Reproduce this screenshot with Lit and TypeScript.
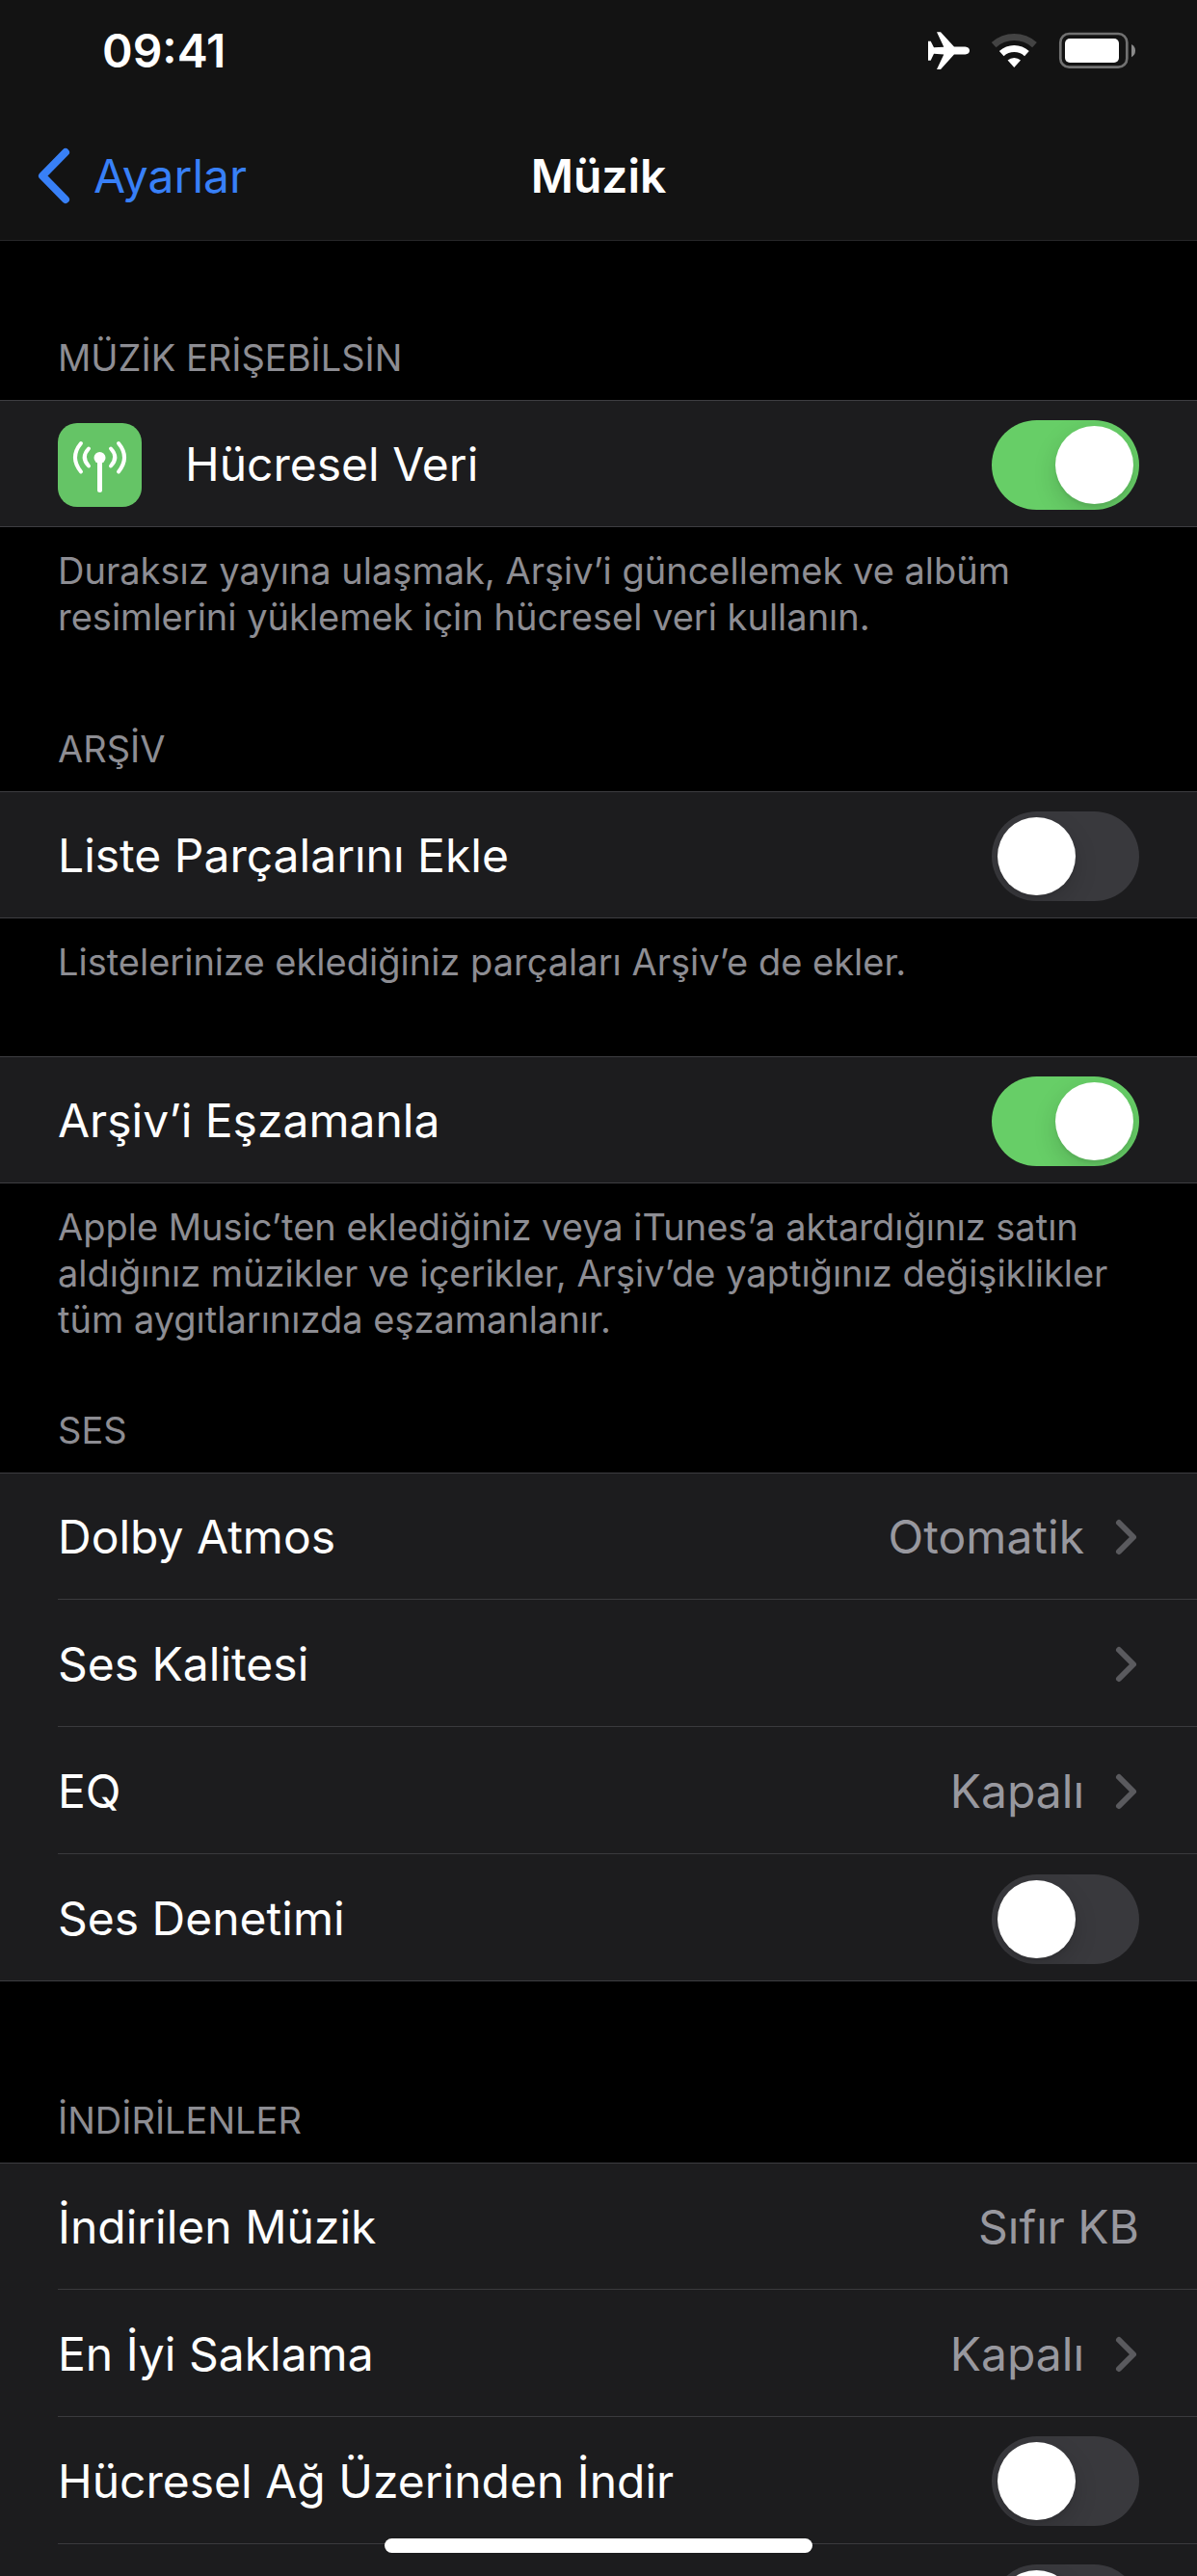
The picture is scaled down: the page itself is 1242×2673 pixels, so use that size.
import { LitElement, html, css, svg, nothing } from "lit";
import { customElement, property, state } from "lit/decorators.js";

interface Row {
  id: string;
  label: string;
  kind: "toggle" | "link" | "text";
  value?: string;
  on?: boolean;
  icon?: boolean;
  bare?: boolean;
}

interface Section {
  space: "first" | "wide" | "medium" | "tight" | "far";
  title?: string;
  rows: Row[];
  note?: string;
}

const SECTIONS: Section[] = [
  {
    space: "first",
    title: "MÜZİK ERİŞEBİLSİN",
    rows: [{ id: "cellular", label: "Hücresel Veri", kind: "toggle", on: true, icon: true }],
    note: "Duraksız yayına ulaşmak, Arşiv’i güncellemek ve albüm resimlerini yüklemek için hücresel veri kullanın.",
  },
  {
    space: "wide",
    title: "ARŞİV",
    rows: [{ id: "add-playlist", label: "Liste Parçalarını Ekle", kind: "toggle", on: false }],
    note: "Listelerinize eklediğiniz parçaları Arşiv’e de ekler.",
  },
  {
    space: "medium",
    rows: [{ id: "sync", label: "Arşiv’i Eşzamanla", kind: "toggle", on: true }],
    note: "Apple Music’ten eklediğiniz veya iTunes’a aktardığınız satın aldığınız müzikler ve içerikler, Arşiv’de yaptığınız değişiklikler tüm aygıtlarınızda eşzamanlanır.",
  },
  {
    space: "tight",
    title: "SES",
    rows: [
      { id: "dolby", label: "Dolby Atmos", kind: "link", value: "Otomatik" },
      { id: "quality", label: "Ses Kalitesi", kind: "link" },
      { id: "eq", label: "EQ", kind: "link", value: "Kapalı" },
      { id: "sound-check", label: "Ses Denetimi", kind: "toggle", on: false },
    ],
  },
  {
    space: "far",
    title: "İNDİRİLENLER",
    rows: [
      { id: "downloaded", label: "İndirilen Müzik", kind: "text", value: "Sıfır KB" },
      { id: "optimize", label: "En İyi Saklama", kind: "link", value: "Kapalı" },
      { id: "cellular-download", label: "Hücresel Ağ Üzerinden İndir", kind: "toggle", on: false },
      { id: "auto-download", label: "Otomatik İndirilenler", kind: "toggle", on: false, bare: true },
    ],
  },
];

@customElement("settings-row")
export class SettingsRow extends LitElement {
  static styles = css`
    :host {
      display: block;
      padding-left: 60px;
    }
    .body {
      box-sizing: border-box;
      min-height: 132px;
      display: flex;
      align-items: center;
      gap: 45px;
      padding: 2px 60px 0 0;
      color: #fff;
      font: inherit;
      text-decoration: none;
    }
    :host([divided]) .body {
      border-bottom: 1px solid #3a3a3d;
    }
    .label {
      flex: 1;
    }
    .end {
      display: flex;
      align-items: center;
      gap: 30px;
      color: #98989f;
    }
    .app-icon {
      display: block;
      width: 87px;
      height: 87px;
    }
    .chevron {
      display: block;
      width: 27px;
      height: 40px;
    }
    .switch {
      appearance: none;
      display: flex;
      box-sizing: border-box;
      width: 153px;
      height: 93px;
      margin: 0 0 0 auto;
      padding: 6px;
      border-radius: 47px;
      background: #39393d;
      overflow: hidden;
    }
    .switch::before {
      content: "";
      width: 81px;
      height: 81px;
      border-radius: 50%;
      background: #fff;
      box-shadow: 0 9px 24px rgba(0, 0, 0, 0.15), 0 3px 3px rgba(0, 0, 0, 0.06);
    }
    .switch:checked {
      background: #67ce67;
      justify-content: flex-end;
    }
  `;

  @property({ attribute: false }) row!: Row;
  @state() private on?: boolean;

  private icon() {
    return html`<svg class="app-icon" viewBox="0 0 87 87" aria-hidden="true">
      <rect width="87" height="87" rx="20" fill="#65c466" />
      <g fill="none" stroke="#fff" stroke-width="4" stroke-linecap="round">
        <path d="M43.5 38V69.500" stroke-width="5" />
        <path d="M32 26.500Q23.500 35.500 32 44.500M55 26.500Q63.500 35.500 55 44.500" />
        <path d="M24 21Q12 35.500 24 50.500M63 21Q75 35.500 63 50.500" />
      </g>
      <circle cx="43.5" cy="36" r="6" fill="#fff" />
    </svg>`;
  }

  render() {
    const r = this.row;
    if (r.kind === "toggle") {
      return html`<div class="body">
        ${r.icon ? this.icon() : nothing}
        ${r.bare ? nothing : html`<label class="label" for=${r.id}>${r.label}</label>`}
        <input
          class="switch"
          id=${r.id}
          type="checkbox"
          role="switch"
          aria-label=${r.label}
          .checked=${this.on ?? r.on ?? false}
          @change=${(e: Event) => (this.on = (e.target as HTMLInputElement).checked)}
        />
      </div>`;
    }
    if (r.kind === "link") {
      return html`<a class="body" href="#${r.id}">
        <span class="label">${r.label}</span>
        <span class="end">
          ${r.value ?? nothing}
          <svg class="chevron" viewBox="0 0 27 40" aria-hidden="true">
            <path d="M6 5 21 20 6 35" fill="none" stroke="#5a5a5e" stroke-width="6" stroke-linecap="round" stroke-linejoin="round" />
          </svg>
        </span>
      </a>`;
    }
    return html`<div class="body">
      <span class="label">${r.label}</span>
      <span class="end">${r.value}</span>
    </div>`;
  }
}

@customElement("status-bar")
export class StatusBar extends LitElement {
  static styles = css`
    :host {
      display: flex;
      align-items: center;
      justify-content: space-between;
      padding: 23px 60px 0 106px;
      font-weight: 600;
    }
    .icons {
      display: block;
      width: 222px;
      height: 44px;
    }
  `;

  // Arc band between two radii, centred on the tip of the fan.
  private band(r1: number, r2: number, color: string) {
    const cx = 92.3;
    const cy = 39;
    const p = (r: number, s: number) => `${cx + s * r * 0.672} ${cy - r * 0.741}`;
    return svg`<path fill=${color} d="M${p(r2, -1)}A${r2} ${r2} 0 0 1 ${p(r2, 1)}L${p(r1, 1)}A${r1} ${r1} 0 0 0 ${p(r1, -1)}Z" />`;
  }

  render() {
    return html`<time>09:41</time>
      <svg class="icons" viewBox="0 0 222 44" role="img" aria-label="Uçak modu, Wi-Fi, pil">
        <path
          fill="#fff"
          d="M3 11.700H5.700L9 18.300 19.300 17.700 12 2.300H16L30 17.500H41.500Q46 18 46 21.500T41.500 25.500H30L16 41H12L19.300 25.500 9 24.800 5.700 31.700H3Z"
        />
        ${this.band(28, 35, "#434343")} ${this.band(16, 23, "#fff")} ${this.band(0, 10, "#fff")}
        <rect x="140.300" y="4" width="69" height="34.700" rx="9" fill="none" stroke="#717171" stroke-width="2.700" />
        <rect x="145" y="9" width="56" height="25" rx="5" fill="#fff" />
        <path d="M214 15V28.300Q218 26 218 21.600T214 15Z" fill="#8a8a8a" />
      </svg>`;
  }
}

@customElement("app-root")
export class AppRoot extends LitElement {
  static styles = css`
    :host {
      display: flex;
      flex-direction: column;
      position: relative;
      height: 100vh;
      overflow: hidden;
      background: #000;
      color: #fff;
      font-family: Inter, "Liberation Sans", sans-serif;
      font-size: 48px;
      line-height: 60px;
    }
    .top {
      background: #131313;
      border-bottom: 1px solid #262628;
    }
    .nav {
      display: grid;
      grid-template-columns: 1fr auto 1fr;
      align-items: center;
      padding: 70px 36px 36px;
    }
    .back {
      display: flex;
      align-items: center;
      gap: 21px;
      color: #3880f7;
      text-decoration: none;
    }
    .back-icon {
      display: block;
      width: 40px;
      height: 60px;
    }
    .title {
      margin: 0;
      font-size: 48px;
      font-weight: 600;
    }
    .list {
      flex: 1;
      min-height: 0;
      overflow-y: auto;
      scrollbar-width: none;
    }
    .first {
      margin-top: 97px;
    }
    .wide {
      margin-top: 89px;
    }
    .medium {
      margin-top: 74px;
    }
    .tight {
      margin-top: 67px;
    }
    .far {
      margin-top: 120px;
    }
    .heading,
    .note {
      margin: 0;
      font-size: 38px;
      line-height: 48px;
      font-weight: 400;
      color: #8d8d93;
    }
    .heading {
      padding: 0 60px 20px;
    }
    .note {
      padding: 21px 60px 0;
    }
    .group {
      background: #1c1c1e;
      box-shadow: inset 0 1px 0 #3d3d41, inset 0 -1px 0 #3d3d41;
    }
    .home {
      position: absolute;
      bottom: 24px;
      left: 50%;
      width: 444px;
      height: 15px;
      margin-left: -222px;
      border-radius: 8px;
      background: #fff;
    }
  `;

  render() {
    return html`
      <header class="top">
        <status-bar></status-bar>
        <nav class="nav">
          <a class="back" href="#ayarlar">
            <svg class="back-icon" viewBox="0 0 40 60" aria-hidden="true">
              <path d="M32 5 8 29.500 32 54" fill="none" stroke="#3880f7" stroke-width="8" stroke-linecap="round" stroke-linejoin="round" />
            </svg>
            Ayarlar
          </a>
          <h1 class="title">Müzik</h1>
        </nav>
      </header>
      <main class="list">
        ${SECTIONS.map(
          (s) => html`<section class=${s.space}>
            ${s.title ? html`<h2 class="heading">${s.title}</h2>` : nothing}
            <div class="group">
              ${s.rows.map((r, i) => html`<settings-row .row=${r} ?divided=${i < s.rows.length - 1}></settings-row>`)}
            </div>
            ${s.note ? html`<p class="note">${s.note}</p>` : nothing}
          </section>`
        )}
      </main>
      <div class="home"></div>
    `;
  }
}
